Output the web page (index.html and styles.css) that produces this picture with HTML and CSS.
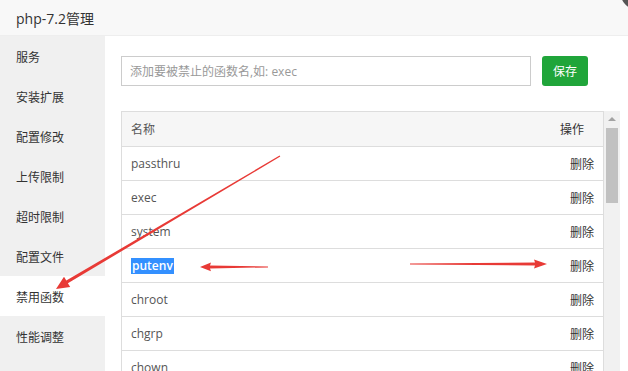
FILE: index.html
```html
<!DOCTYPE html>
<html lang="zh-CN">
<head>
  <meta charset="UTF-8" />
  <title>php-7.2管理</title>
  <link rel="stylesheet" href="styles.css">
</head>
<body>
  <div class="layer">
    <div class="layer-title">php-7.2管理</div>
    <span class="layer-close"></span>

    <div class="layer-body">
      <ul class="side-menu">
        <li>服务</li>
        <li>安装扩展</li>
        <li>配置修改</li>
        <li>上传限制</li>
        <li>超时限制</li>
        <li>配置文件</li>
        <li class="active">禁用函数</li>
        <li>性能调整</li>
      </ul>

      <div class="content">
        <div class="add-row">
          <input type="text" class="fn-input" placeholder="添加要被禁止的函数名,如: exec">
          <button class="btn-save">保存</button>
        </div>

        <div class="table-box">
          <div class="table-wrap">
            <table class="fn-table">
              <thead>
                <tr><th>名称</th><th class="op">操作</th></tr>
              </thead>
              <tbody>
                <tr><td>passthru</td><td class="op">删除</td></tr>
                <tr><td>exec</td><td class="op">删除</td></tr>
                <tr><td>system</td><td class="op">删除</td></tr>
                <tr><td><span class="selected">putenv</span></td><td class="op">删除</td></tr>
                <tr><td>chroot</td><td class="op">删除</td></tr>
                <tr><td>chgrp</td><td class="op">删除</td></tr>
                <tr><td>chown</td><td class="op">删除</td></tr>
              </tbody>
            </table>
          </div>
          <div class="scrollbar">
            <span class="scroll-up"></span>
            <span class="scroll-thumb"></span>
          </div>
        </div>
      </div>
    </div>

    <!-- annotation arrows drawn over the screenshot -->
    <svg class="marks" width="628" height="371" viewBox="0 0 628 371">
      <polygon fill="#e83a36" points="279.6,155.6 66.3,280.6 64,276.7 56,289 70.2,287.1 67.9,283.2 280.3,156.6"/>
      <polygon fill="#e83a36" points="268,266.5 210,265.6 211,262.6 200,267 211,271.2 210,268.4 268,267.4"/>
      <polygon fill="#e83a36" points="410,263.6 535,262.6 534,259.6 547,264 534,268.4 535,265.4 410,264.4"/>
    </svg>
  </div>
</body>
</html>
```

FILE: styles.css
```css
body {
  margin: 0;
  padding: 0;
  font-family: "Open Sans", "Noto Sans CJK SC", sans-serif;
  color: #333;
  background: #fff;
}

.layer {
  position: relative;
  width: 628px;
  height: 371px;
  overflow: hidden;
}

.layer-title {
  height: 35px;
  line-height: 37px;
  padding-left: 16px;
  font-size: 14px;
  color: #333;
  background-color: #f8f8f8;
  border-bottom: 1px solid #eee;
}

.layer-close {
  position: absolute;
  right: -23px;
  top: -21px;
  width: 30px;
  height: 30px;
  border-radius: 50%;
  background-color: #555;
}

.layer-body {
  display: flex;
  height: 335px;
}

.side-menu {
  width: 105px;
  margin: 0;
  padding: 0;
  list-style: none;
  background-color: #f0f0f0;
}

.side-menu li {
  height: 40px;
  line-height: 44px;
  overflow: hidden;
  padding-left: 16px;
  font-size: 12px;
  color: #333;
}

.side-menu li.active {
  background-color: #fff;
}

.content {
  flex: 1;
  padding: 20px 8px 0 16px;
}

.add-row {
  display: flex;
  align-items: center;
  gap: 11px;
}

.fn-input {
  width: 410px;
  height: 30px;
  box-sizing: border-box;
  padding: 0 8px;
  border: 1px solid #ccc;
  font-family: inherit;
  font-size: 12px;
  outline: none;
}

.fn-input::placeholder {
  color: #999;
}

.btn-save {
  width: 46px;
  height: 30px;
  border: none;
  border-radius: 3px;
  background-color: #20a53a;
  color: #fff;
  font-family: inherit;
  font-size: 12px;
  cursor: pointer;
}

.table-box {
  display: flex;
  margin-top: 25px;
}

.table-wrap {
  flex: 1;
  border: 1px solid #ddd;
  border-bottom: none;
}

.fn-table {
  width: 100%;
  border-collapse: collapse;
  font-size: 12px;
}

.fn-table th {
  height: 34px;
  padding: 0 9px;
  text-align: left;
  font-weight: normal;
  color: #555;
  background-color: #f6f6f6;
  border-bottom: 1px solid #ddd;
}

.fn-table th.op {
  padding-right: 19px;
}

.fn-table td {
  height: 33px;
  padding: 0 9px;
  color: #555;
  border-bottom: 1px solid #ddd;
}

.fn-table .op {
  text-align: right;
  color: #333;
}

.selected {
  display: inline-block;
  padding: 0 1px;
  line-height: 16px;
  font-weight: 600;
  color: #fff;
  background-color: #3390ff;
}

.scrollbar {
  position: relative;
  width: 16px;
  background-color: #f1f1f1;
}

.scroll-up {
  display: block;
  margin: 6px auto 0;
  width: 0;
  height: 0;
  border-left: 4px solid transparent;
  border-right: 4px solid transparent;
  border-bottom: 4px solid #a3a3a3;
}

.scroll-thumb {
  display: block;
  margin: 7px auto 0;
  width: 12px;
  height: 75px;
  background-color: #c1c1c1;
}

.marks {
  position: absolute;
  left: 0;
  top: 0;
  pointer-events: none;
}
```
